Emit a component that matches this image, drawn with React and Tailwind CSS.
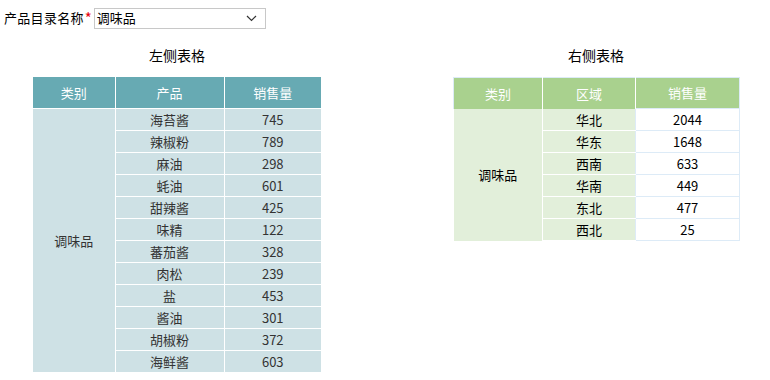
import React from 'react';

const leftRows = [
  ['海苔酱', 745], ['辣椒粉', 789], ['麻油', 298], ['蚝油', 601],
  ['甜辣酱', 425], ['味精', 122], ['蕃茄酱', 328], ['肉松', 239],
  ['盐', 453], ['酱油', 301], ['胡椒粉', 372], ['海鲜酱', 603],
];

const rightRows = [
  ['华北', 2044], ['华东', 1648], ['西南', 633],
  ['华南', 449], ['东北', 477], ['西北', 25],
];

const font = { fontFamily: '"Noto Sans CJK SC", "Noto Sans", sans-serif' };

const App = () => {
  return (
    <div className="w-[770px] h-[380px] bg-white text-[13px] text-black overflow-hidden" style={font}>
      <div className="flex items-center h-[36px] pl-[4px]">
        <span className="text-[13px] leading-[20px] tracking-[0.3px]">产品目录名称</span>
        <span className="text-red-600 text-[15px] leading-[20px] ml-[1px]">*</span>
        <div className="ml-[2px] w-[172px] h-[21px] border border-[#c8c8c8] flex items-center justify-between pl-[2px] pr-[8px]">
          <span className="leading-[18px]">调味品</span>
          <svg width="11" height="7" viewBox="0 0 11 7" fill="none" stroke="#333" strokeWidth="1.2">
            <path d="M1 1l4.5 4.5L10 1" />
          </svg>
        </div>
      </div>

      <div className="flex pl-[33px] gap-[132px] mt-[6px]">
        <div className="w-[288px]">
          <div className="h-[35px] text-center text-[14px] leading-[26px]">左侧表格</div>
          <table className="table-fixed border-collapse w-[288px] text-[#333]">
            <colgroup>
              <col className="w-[82px]" />
              <col className="w-[109px]" />
              <col className="w-[97px]" />
            </colgroup>
            <thead>
              <tr className="h-[31px] bg-[#67aab3] text-white">
                <th className="font-normal border-r border-white">类别</th>
                <th className="font-normal border-r border-white">产品</th>
                <th className="font-normal">销售量</th>
              </tr>
            </thead>
            <tbody className="bg-[#cee1e5]">
              {leftRows.map(([name, qty], i) => (
                <tr key={name} className="h-[22px]">
                  {i === 0 && (
                    <td rowSpan={leftRows.length} className="text-center border-r border-t border-white p-0">调味品</td>
                  )}
                  <td className="text-center border border-white p-0 leading-[21px]">{name}</td>
                  <td className="text-center border-t border-b border-white p-0 leading-[21px]">{qty}</td>
                </tr>
              ))}
            </tbody>
          </table>
        </div>

        <div className="w-[286px]">
          <div className="h-[35px] text-center text-[14px] leading-[26px]">右侧表格</div>
          <table className="table-fixed border-collapse w-[286px]">
            <colgroup>
              <col className="w-[89px]" />
              <col className="w-[93px]" />
              <col className="w-[104px]" />
            </colgroup>
            <thead>
              <tr className="h-[31px] bg-[#a9d18e] text-white">
                <th className="font-normal border-r border-white border-t border-l border-t-[#ddebf7] border-l-[#ddebf7]">类别</th>
                <th className="font-normal border-r border-white border-t border-t-[#ddebf7]">区域</th>
                <th className="font-normal border-t border-r border-[#ddebf7]">销售量</th>
              </tr>
            </thead>
            <tbody>
              {rightRows.map(([name, qty], i) => (
                <tr key={name} className="h-[22px]">
                  {i === 0 && (
                    <td rowSpan={rightRows.length} className="text-center bg-[#e2efda] border-r border-white p-0">调味品</td>
                  )}
                  <td className="text-center bg-[#e2efda] border-b border-white p-0 leading-[21px]">{name}</td>
                  <td className="text-center bg-white border border-[#ddebf7] p-0 leading-[21px]">{qty}</td>
                </tr>
              ))}
            </tbody>
          </table>
        </div>
      </div>
    </div>
  );
};

export default App;
